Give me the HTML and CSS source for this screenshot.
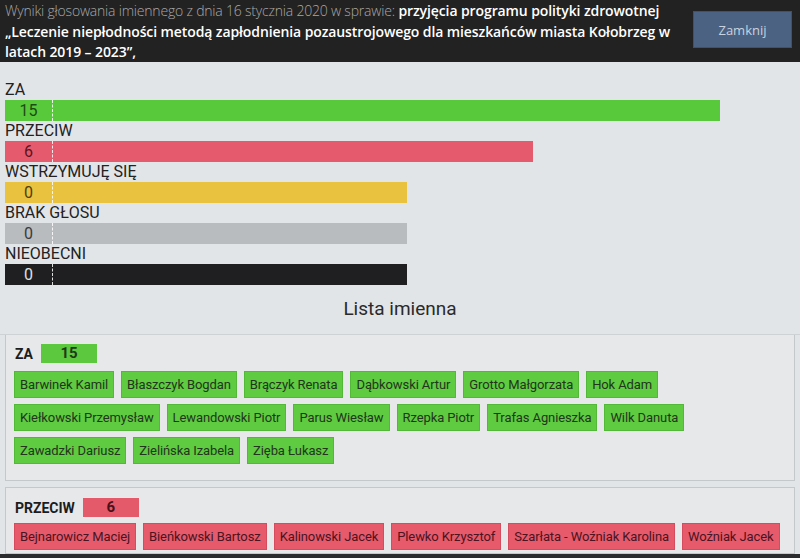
FILE: index.html
```html
<!DOCTYPE html>
<html lang="pl">
<head>
<meta charset="utf-8">
<title>Wyniki głosowania</title>
<link rel="stylesheet" href="styles.css">
</head>
<body>
<header class="top">
  <p class="title"><span class="lead">Wyniki głosowania imiennego z dnia 16 stycznia 2020 w sprawie:</span> <strong>przyjęcia programu polityki zdrowotnej „Leczenie niepłodności metodą zapłodnienia pozaustrojowego dla mieszkańców miasta Kołobrzeg w latach 2019 – 2023”,</strong></p>
  <button class="close">Zamknij</button>
</header>

<section class="bars">
  <div class="row">
    <div class="label">ZA</div>
    <div class="bar green" style="width:715px"><span class="num">15</span></div>
  </div>
  <div class="row">
    <div class="label">PRZECIW</div>
    <div class="bar red" style="width:528px"><span class="num">6</span></div>
  </div>
  <div class="row">
    <div class="label">WSTRZYMUJĘ SIĘ</div>
    <div class="bar yellow" style="width:402px"><span class="num">0</span></div>
  </div>
  <div class="row">
    <div class="label">BRAK GŁOSU</div>
    <div class="bar gray" style="width:402px"><span class="num">0</span></div>
  </div>
  <div class="row">
    <div class="label">NIEOBECNI</div>
    <div class="bar black" style="width:402px"><span class="num">0</span></div>
  </div>
</section>

<h2 class="list-title">Lista imienna</h2>

<section class="panel">
  <div class="panel-head"><span class="kind">ZA</span><span class="badge green">15</span></div>
  <div class="chips">
    <span class="chip green">Barwinek Kamil</span>
    <span class="chip green">Błaszczyk Bogdan</span>
    <span class="chip green">Brączyk Renata</span>
    <span class="chip green">Dąbkowski Artur</span>
    <span class="chip green">Grotto Małgorzata</span>
    <span class="chip green">Hok Adam</span>
    <span class="chip green">Kiełkowski Przemysław</span>
    <span class="chip green">Lewandowski Piotr</span>
    <span class="chip green">Parus Wiesław</span>
    <span class="chip green">Rzepka Piotr</span>
    <span class="chip green">Trafas Agnieszka</span>
    <span class="chip green">Wilk Danuta</span>
    <span class="chip green">Zawadzki Dariusz</span>
    <span class="chip green">Zielińska Izabela</span>
    <span class="chip green">Zięba Łukasz</span>
  </div>
</section>

<section class="panel second">
  <div class="panel-head"><span class="kind">PRZECIW</span><span class="badge red">6</span></div>
  <div class="chips">
    <span class="chip red">Bejnarowicz Maciej</span>
    <span class="chip red">Bieńkowski Bartosz</span>
    <span class="chip red">Kalinowski Jacek</span>
    <span class="chip red">Plewko Krzysztof</span>
    <span class="chip red">Szarłata - Woźniak Karolina</span>
    <span class="chip red">Woźniak Jacek</span>
  </div>
</section>
<div class="footer"></div>
</body>
</html>
```

FILE: styles.css
```css
html, body {
  margin: 0;
  padding: 0;
}
body {
  width: 800px;
  height: 558px;
  overflow: hidden;
  background: #e2e5e8;
  font-family: Roboto, "Noto Sans", sans-serif;
  color: #222;
}
.top {
  height: 62px;
  background: #222222;
  display: flex;
  align-items: flex-start;
  justify-content: space-between;
  padding: 0 8px 0 5px;
  box-sizing: border-box;
}
.title {
  margin: 1px 0 0;
  width: 672px;
  font-family: "Open Sans", sans-serif;
  font-size: 14px;
  line-height: 20.5px;
  color: #a8a8a8;
}
.title .lead {
  font-weight: 300;
  letter-spacing: -0.2px;
}
.title strong {
  color: #ffffff;
  font-weight: 600;
  letter-spacing: -0.1px;
}
.close {
  margin-top: 11px;
  width: 99px;
  height: 37px;
  background: #4b6283;
  border: 1px solid #3d5270;
  color: #c9d2de;
  font-family: "Open Sans", sans-serif;
  font-size: 13px;
  padding: 0;
}
.bars {
  padding: 18px 0 0 5px;
}
.row {
  height: 41px;
}
.label {
  height: 20px;
  font-size: 16px;
  line-height: 20px;
  color: #222;
}
.bar {
  height: 21px;
  display: flex;
  align-items: center;
}
.num {
  width: 47px;
  height: 21px;
  line-height: 21px;
  text-align: center;
  font-size: 16px;
  border-right: 1px dashed rgba(255, 255, 255, 0.85);
}
.bar.green { background: #58c93b; }
.bar.green .num { color: #1d4a14; }
.bar.red { background: #e65a6d; }
.bar.red .num { color: #5c1420; }
.bar.yellow { background: #e9c23f; }
.bar.yellow .num { color: #4e3d0a; }
.bar.gray { background: #b9bcbe; }
.bar.gray .num { color: #3a3a3a; }
.bar.black { background: #1f1f22; }
.bar.black .num { color: #e0e0e0; }
.list-title {
  margin: 8px 0 0;
  height: 41px;
  line-height: 32px;
  text-align: center;
  font-weight: 400;
  font-size: 19px;
  color: #2a2a2a;
  border-bottom: 1px solid #cfd2d4;
}
.panel {
  margin: 0 5px;
  border: 1px solid #c5c8cb;
  border-top: none;
  background: #e6e8ea;
  padding: 9px 4px 16px 8px;
}
.panel.second {
  margin-top: 6px;
  border-top: 1px solid #c5c8cb;
  padding-top: 10px;
  padding-bottom: 3px;
}
.panel-head {
  display: flex;
  align-items: center;
  gap: 8px;
  padding-left: 1px;
  height: 19px;
  margin-bottom: 8px;
}
.second .panel-head {
  margin-bottom: 6px;
}
.kind {
  font-weight: 700;
  font-size: 14px;
  color: #1c1c1c;
}
.badge {
  width: 56px;
  height: 19px;
  line-height: 19px;
  text-align: center;
  font-weight: 700;
  font-size: 15px;
}
.badge.green { background: #5cc83e; color: #1f3a17; }
.badge.red { background: #e55a6b; color: #4a1019; }
.chips {
  display: flex;
  flex-wrap: wrap;
  gap: 6px 7px;
}
.chip {
  height: 27px;
  line-height: 27px;
  padding: 0 6px;
  font-size: 13px;
  letter-spacing: -0.1px;
  white-space: nowrap;
}
.chip.green {
  background: #5fcb40;
  color: #22351c;
  box-shadow: inset 0 0 0 1px #52b837;
}
.chip.red {
  background: #e65a6c;
  color: #4a1420;
  box-shadow: inset 0 0 0 1px #d44c5e;
}
.footer {
  height: 20px;
  background: #2a2c2e;
}
```
